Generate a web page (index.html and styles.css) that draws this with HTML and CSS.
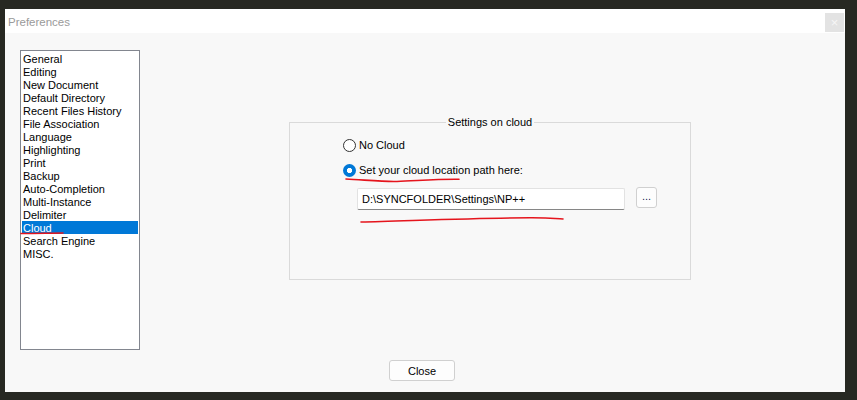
FILE: index.html
```html
<!DOCTYPE html>
<html lang="en">
<head>
<meta charset="utf-8">
<title>Preferences</title>
<link rel="stylesheet" href="styles.css">
</head>
<body>
<div class="dialog">
  <div class="titlebar">
    <span class="title">Preferences</span>
    <span class="close-x">×</span>
  </div>
  <div class="content">
    <div class="main">
      <ul class="listbox">
        <li>General</li>
        <li>Editing</li>
        <li>New Document</li>
        <li>Default Directory</li>
        <li>Recent Files History</li>
        <li>File Association</li>
        <li>Language</li>
        <li>Highlighting</li>
        <li>Print</li>
        <li>Backup</li>
        <li>Auto-Completion</li>
        <li>Multi-Instance</li>
        <li>Delimiter</li>
        <li class="selected">Cloud</li>
        <li>Search Engine</li>
        <li>MISC.</li>
      </ul>
      <div class="group">
        <span class="legend">Settings on cloud</span>
        <label class="radio-row">
          <span class="radio"></span>
          <span>No Cloud</span>
        </label>
        <label class="radio-row second">
          <span class="radio checked"></span>
          <span>Set your cloud location path here:</span>
        </label>
        <div class="path-row">
          <div class="textbox">D:\SYNCFOLDER\Settings\NP++</div>
          <button class="browse">...</button>
        </div>
      </div>
    </div>
    <div class="footer">
      <button class="btn">Close</button>
    </div>
  </div>
  <!-- hand-drawn red pen marks over the dialog -->
  <svg class="marks" width="840" height="383" viewBox="0 0 840 383">
    <path d="M16 224.5 C 30 224.2, 45 224.2, 58 224" />
    <path d="M341 170 C 360 171, 380 173, 392 172.5 C 410 172, 430 170, 454 170.3" />
    <path d="M356 213 C 400 212, 470 209, 525 208.8 C 540 208.7, 550 209.5, 558 210" />
  </svg>
</div>
</body>
</html>
```
FILE: styles.css
```css
html, body {
  margin: 0;
  padding: 0;
}

body {
  background: #272822;
  width: 857px;
  height: 400px;
  overflow: hidden;
  font-family: "Liberation Sans", Arial, sans-serif;
  font-size: 11px;
  color: #000;
}

.dialog {
  position: relative;
  margin: 9px 0 0 5px;
  width: 840px;
  height: 383px;
  display: flex;
  flex-direction: column;
  background: #f8f8f8;
}

.titlebar {
  height: 24px;
  background: #fff;
  display: flex;
  align-items: center;
  justify-content: space-between;
}

.title {
  padding-left: 3px;
  padding-top: 1px;
  font-size: 11.5px;
  color: #9a9a9a;
}

.close-x {
  width: 19px;
  height: 19px;
  margin-right: 1px;
  margin-top: 2px;
  background: #e3e3e3;
  color: #f6f6f6;
  font-size: 13px;
  line-height: 19px;
  text-align: center;
}

.content {
  flex: 1;
  display: flex;
  flex-direction: column;
}

.main {
  display: flex;
  align-items: flex-start;
  padding: 17px 0 0 15px;
}

.listbox {
  list-style: none;
  margin: 0;
  padding: 1px 1px 0 1px;
  width: 116px;
  height: 297px;
  box-sizing: content-box;
  border: 1px solid #82868f;
  background: #fff;
}

.listbox li {
  height: 12px;
  padding-top: 1px;
  line-height: 13px;
  padding-left: 1px;
  white-space: nowrap;
}

.listbox li.selected {
  background: #0078d7;
  color: #fff;
}

.group {
  position: relative;
  margin: 72px 0 0 149px;
  width: 402px;
  height: 158px;
  border: 1px solid #dadada;
  padding: 16px 0 0 53px;
  box-sizing: border-box;
  display: flex;
  flex-direction: column;
}

.legend {
  position: absolute;
  top: -7px;
  left: 0;
  right: 0;
  margin: 0 auto;
  width: max-content;
  padding: 0 2px;
  background: #f8f8f8;
  line-height: 13px;
}

.radio-row {
  display: flex;
  align-items: center;
  gap: 3px;
  height: 13px;
  line-height: 13px;
}

.radio-row.second {
  margin-top: 12px;
}

.radio {
  width: 13px;
  height: 13px;
  box-sizing: border-box;
  border-radius: 50%;
  border: 1px solid #333;
  background: #fff;
  flex: none;
}

.radio.checked {
  border: none;
  background: radial-gradient(circle, #fff 0 2.4px, #0078d7 2.9px);
}

.path-row {
  display: flex;
  align-items: flex-start;
  margin-top: 10px;
  padding-left: 14px;
}

.textbox {
  margin-top: 1px;
  width: 268px;
  height: 22px;
  box-sizing: border-box;
  background: #fff;
  border: 1px solid #e2e2e2;
  border-bottom-color: #868686;
  border-radius: 2px;
  padding-left: 4px;
  line-height: 20px;
  font-size: 11px;
}

.browse {
  margin-left: 11px;
  width: 21px;
  height: 21px;
  padding: 0 0 3px 0;
  border: 1px solid #d0d0d0;
  border-radius: 3px;
  background: #fdfdfd;
  font-family: inherit;
  font-size: 11px;
  color: #1a1a5a;
  line-height: 16px;
}

.footer {
  padding: 10px 0 0 384px;
}

.btn {
  width: 66px;
  height: 21px;
  border: 1px solid #d0d0d0;
  border-radius: 3px;
  background: #fdfdfd;
  font-family: inherit;
  font-size: 11px;
  color: #000;
  padding: 0;
}

.marks {
  position: absolute;
  left: 0;
  top: 0;
  pointer-events: none;
}

.marks path {
  fill: none;
  stroke: #e5141c;
  stroke-width: 1.6;
  stroke-linecap: round;
}
```
